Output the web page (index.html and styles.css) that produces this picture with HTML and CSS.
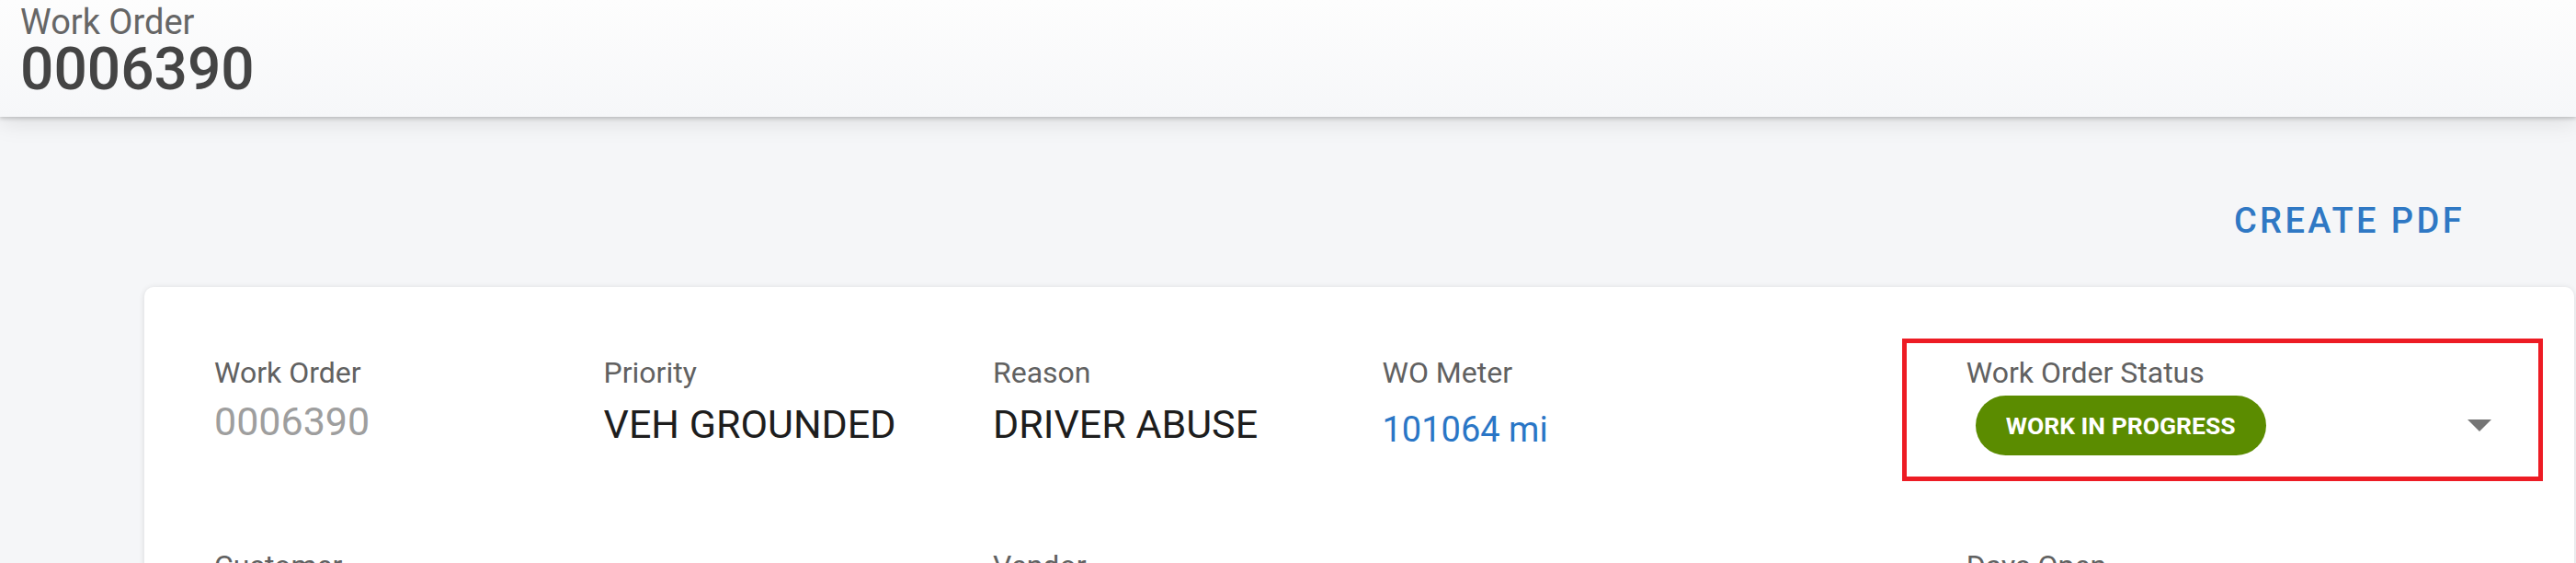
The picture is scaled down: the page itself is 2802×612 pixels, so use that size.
FILE: index.html
```html
<!DOCTYPE html>
<html lang="en">
<head>
<meta charset="utf-8">
<title>Work Order 0006390</title>
<link rel="stylesheet" href="styles.css">
</head>
<body>
<header class="topbar">
  <div class="topbar-label">Work Order</div>
  <div class="topbar-number">0006390</div>
</header>
<main class="main">
  <div class="toolbar">
    <button class="btn-text" type="button">CREATE PDF</button>
  </div>
  <section class="card">
    <div class="grid">
      <div class="field f-wo">
        <div class="label">Work Order</div>
        <div class="value value-muted">0006390</div>
      </div>
      <div class="field f-priority">
        <div class="label">Priority</div>
        <div class="value">VEH GROUNDED</div>
      </div>
      <div class="field f-reason">
        <div class="label">Reason</div>
        <div class="value">DRIVER ABUSE</div>
      </div>
      <div class="field f-meter">
        <div class="label">WO Meter</div>
        <div class="value value-link">101064 mi</div>
      </div>
      <div class="field f-status">
        <div class="highlight"></div>
        <div class="label">Work Order Status</div>
        <div class="select">
          <span class="pill">WORK IN PROGRESS</span>
          <svg class="caret" width="26" height="13" viewBox="0 0 26 13"><polygon points="0,0 26,0 13,13" fill="#757575"/></svg>
        </div>
      </div>
      <div class="field f-customer">
        <div class="label">Customer</div>
      </div>
      <div class="field f-vendor">
        <div class="label">Vendor</div>
      </div>
      <div class="field f-days">
        <div class="label">Days Open</div>
      </div>
    </div>
  </section>
</main>
</body>
</html>
```
FILE: styles.css
```css
html, body {
  margin: 0;
  padding: 0;
  background: #f5f6f8;
  font-family: Roboto, "Noto Sans", "Liberation Sans", sans-serif;
  overflow: hidden;
}

.topbar {
  position: relative;
  z-index: 2;
  height: 127px;
  box-sizing: border-box;
  padding: 4px 0 0 22px;
  background: linear-gradient(#fdfdfd, #f6f7f9);
  box-shadow: 0 2px 4px rgba(0, 0, 0, 0.18), 0 6px 24px rgba(0, 0, 0, 0.10);
}

.topbar-label {
  font-size: 38px;
  line-height: 40px;
  color: #666666;
}

.topbar-number {
  font-size: 64px;
  line-height: 64px;
  font-weight: 500;
  color: #444444;
}

.main {
  padding: 0 2px 0 157px;
}

.toolbar {
  display: flex;
  justify-content: flex-end;
  padding: 91px 119px 0 0;
  margin-bottom: 48px;
}

.btn-text {
  background: none;
  border: 0;
  padding: 0;
  font-family: inherit;
  font-size: 38px;
  line-height: 45.6px;
  font-weight: 500;
  letter-spacing: 3.4px;
  color: #2f78c4;
  cursor: pointer;
}

.card {
  background: #ffffff;
  border-radius: 10px;
  box-shadow: 0 1px 6px rgba(0, 0, 0, 0.12);
  padding: 74px 26px 120px 76px;
}

.grid {
  display: grid;
  grid-template-columns: repeat(12, 1fr);
  row-gap: 101px;
  align-items: start;
}

.field {
  position: relative;
}

.label {
  font-size: 32px;
  line-height: 38.4px;
  color: #616161;
}

.value {
  margin-top: 12.2px;
  font-size: 43px;
  line-height: 50.4px;
  color: #1d1d1d;
}

.value-muted {
  margin-top: 9.2px;
  color: #9e9e9e;
}

.value-link {
  margin-top: 17.6px;
  font-size: 38px;
  color: #2a76c6;
}

.f-wo { grid-column: 1 / span 2; }
.f-priority { grid-column: 3 / span 2; }
.f-reason { grid-column: 5 / span 2; }
.f-meter { grid-column: 7 / span 2; }
.f-status { grid-column: 10 / span 3; }
.f-customer { grid-column: 1 / span 4; }
.f-vendor { grid-column: 5 / span 5; }
.f-days { grid-column: 10 / span 3; }

.select {
  display: flex;
  align-items: center;
  justify-content: space-between;
  margin: 5.6px 0 0 10px;
  padding-right: 64px;
}

.pill {
  display: inline-flex;
  align-items: center;
  height: 65px;
  padding: 0 33px;
  border-radius: 33px;
  background: #5b8c00;
  color: #ffffff;
  font-size: 26.5px;
  font-weight: 700;
  white-space: nowrap;
}

.caret {
  display: block;
}

.highlight {
  position: absolute;
  left: -70px;
  top: -18px;
  width: 697px;
  height: 155px;
  box-sizing: border-box;
  border: 5px solid #ed1c24;
  pointer-events: none;
}
```
